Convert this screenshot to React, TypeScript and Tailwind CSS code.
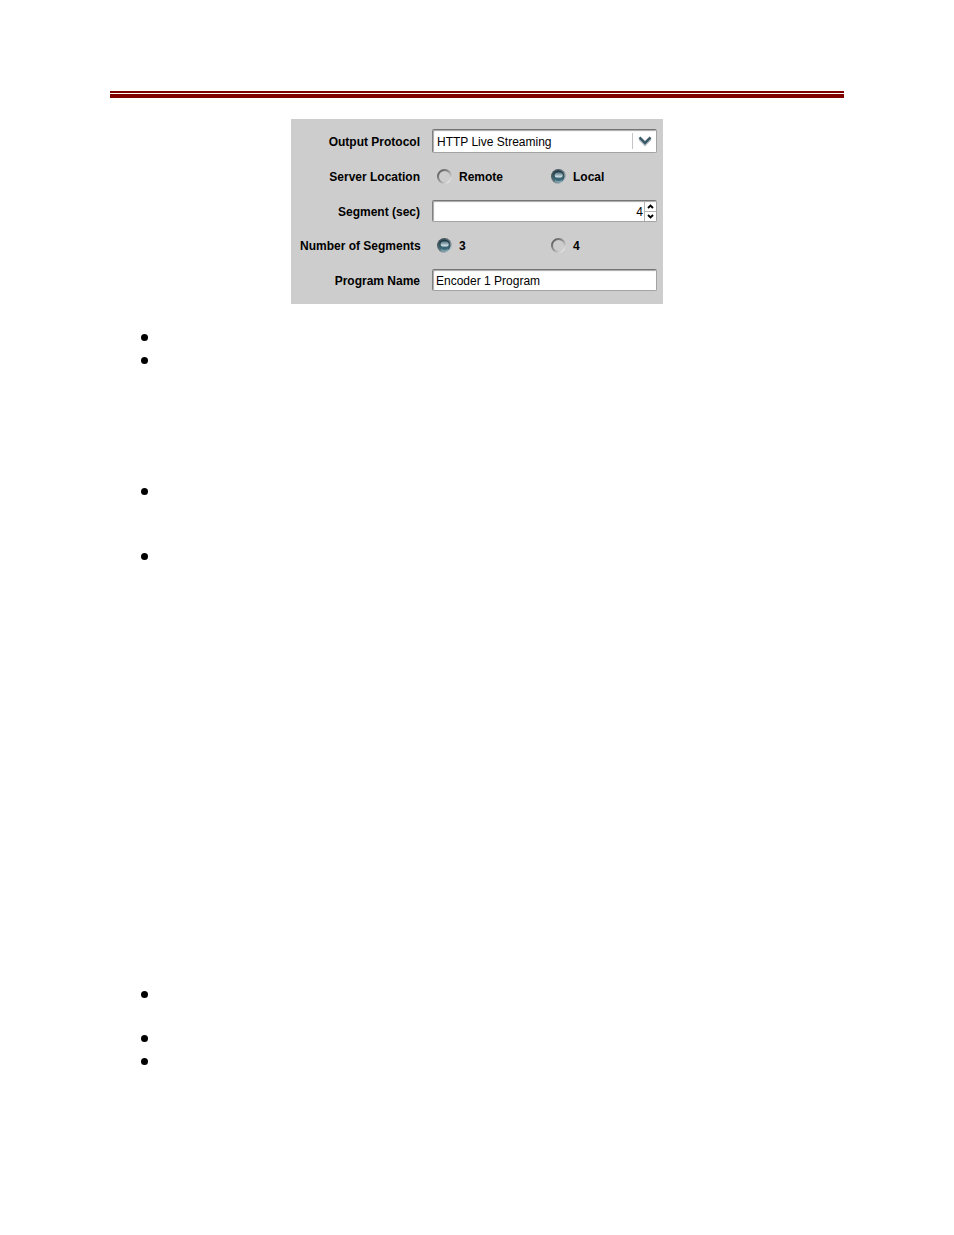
import { useState } from "react";

const labelClass = "pt-[2px] text-right whitespace-nowrap";

const fieldClass =
  "w-full rounded-[2px] border border-[#a3a3a3] border-t-[#757575] border-l-[#808080] bg-white pt-[2px] text-xs text-black shadow-[inset_1px_1px_1px_#a8a8a8] outline-none";

type RadioProps = {
  name: string;
  label: string;
  checked: boolean;
  onChange: () => void;
};

function Radio({ name, label, checked, onChange }: RadioProps) {
  return (
    <label className="flex h-[15px] w-[114px] shrink-0 items-center gap-[7px]">
      <span className="relative size-[15px]">
        <input
          type="radio"
          name={name}
          checked={checked}
          onChange={onChange}
          className="peer block size-[15px] appearance-none rounded-full outline-none"
        />
        <svg
          viewBox="0 0 15 15"
          className="pointer-events-none absolute inset-0 size-[15px] peer-checked:hidden"
        >
          <circle cx="7.5" cy="7.5" r="6.5" fill="none" stroke="url(#ring)" strokeWidth="2" />
        </svg>
        <svg
          viewBox="0 0 15 15"
          className="pointer-events-none absolute inset-0 hidden size-[15px] peer-checked:block"
        >
          <circle cx="7.5" cy="7.5" r="7.5" fill="url(#rim)" />
          <circle cx="7.5" cy="7.5" r="6" fill="url(#ball)" />
          <ellipse cx="7.7" cy="6.2" rx="4" ry="3" fill="url(#shine)" />
          <path d="M3.4 8.6h8.4c-.4 1.5-1.8 2.4-4.2 2.4s-3.8-.9-4.2-2.4z" fill="#3a6677" />
          <path d="M4 11.6c2 1.5 5 1.5 7 0" fill="none" stroke="#7fa3af" strokeWidth="1.2" />
        </svg>
      </span>
      {label}
    </label>
  );
}

function Gradients() {
  return (
    <svg className="absolute size-0" aria-hidden="true">
      <defs>
        <linearGradient id="ring" x1="0" y1="0" x2="1" y2="1">
          <stop offset="0.1" stopColor="#606060" />
          <stop offset="0.5" stopColor="#979797" />
          <stop offset="0.9" stopColor="#e6e6e6" />
        </linearGradient>
        <linearGradient id="rim" x1="0" y1="0" x2="1" y2="1">
          <stop offset="0.15" stopColor="#3d4e56" />
          <stop offset="0.5" stopColor="#65777f" />
          <stop offset="0.9" stopColor="#d8dcde" />
        </linearGradient>
        <linearGradient id="ball" x1="0" y1="0" x2="0" y2="1">
          <stop offset="0" stopColor="#1d3640" />
          <stop offset="1" stopColor="#4b7988" />
        </linearGradient>
        <linearGradient id="shine" x1="0" y1="0" x2="0" y2="1">
          <stop offset="0" stopColor="#4f707d" />
          <stop offset="0.8" stopColor="#d5e3e8" />
        </linearGradient>
      </defs>
    </svg>
  );
}

function EncoderForm() {
  const [location, setLocation] = useState("Local");
  const [segment, setSegment] = useState(4);
  const [count, setCount] = useState("3");
  const [program, setProgram] = useState("Encoder 1 Program");

  return (
    <form className="grid w-[372px] grid-cols-[120px_225px] items-center gap-x-3 gap-y-4 bg-[#cdcdcd] pt-[10px] pr-[6px] pb-[13px] pl-[9px] text-xs font-bold text-black">
      <label htmlFor="protocol" className={labelClass}>
        Output Protocol
      </label>
      <div className="relative h-6">
        <select
          id="protocol"
          className={`${fieldClass} h-6 appearance-none pl-1 font-normal`}
        >
          <option>HTTP Live Streaming</option>
        </select>
        <div className="pointer-events-none absolute inset-y-1 right-0 flex w-[25px] items-center justify-center border-l border-[#c4c4c4]">
          <svg viewBox="0 0 14 12" className="h-3 w-[14px]">
            <path d="M1.5 3.8l5.5 5.5 5.5-5.5" fill="none" stroke="#b4bfc4" strokeWidth="3" />
            <path d="M1.5 2.3l5.5 5.5 5.5-5.5" fill="none" stroke="#3c5a69" strokeWidth="2.6" />
          </svg>
        </div>
      </div>

      <span className="h-[15px] text-right leading-[17px]">Server Location</span>
      <div role="radiogroup" aria-label="Server Location" className="flex h-[15px] pl-[5px]">
        {["Remote", "Local"].map((value) => (
          <Radio
            key={value}
            name="location"
            label={value}
            checked={location === value}
            onChange={() => setLocation(value)}
          />
        ))}
      </div>

      <label htmlFor="segment" className={labelClass}>
        Segment (sec)
      </label>
      <div className="relative h-[22px]">
        <input
          id="segment"
          type="text"
          inputMode="numeric"
          value={segment}
          onChange={(e) => setSegment(Number(e.target.value) || 0)}
          className={`${fieldClass} h-[22px] pr-[13px] text-right font-normal`}
        />
        <div className="absolute top-[2px] right-px bottom-px flex w-3 flex-col border-l border-[#b5b5b5]">
          <button
            type="button"
            aria-label="Increase"
            onClick={() => setSegment(segment + 1)}
            className="flex flex-1 items-center justify-center border-b border-[#b5b5b5]"
          >
            <svg viewBox="0 0 7 5" className="h-[5px] w-[7px]">
              <path d="M1 4l2.5-2.5L6 4" fill="none" stroke="#000" strokeWidth="1.9" />
            </svg>
          </button>
          <button
            type="button"
            aria-label="Decrease"
            onClick={() => setSegment(segment - 1)}
            className="flex flex-1 items-center justify-center"
          >
            <svg viewBox="0 0 7 5" className="h-[5px] w-[7px]">
              <path d="M1 1l2.5 2.5L6 1" fill="none" stroke="#000" strokeWidth="1.9" />
            </svg>
          </button>
        </div>
      </div>

      <span className="h-[15px] text-right leading-[17px] whitespace-nowrap">
        Number of Segments
      </span>
      <div role="radiogroup" aria-label="Number of Segments" className="flex h-[15px] pl-[5px]">
        {["3", "4"].map((value) => (
          <Radio
            key={value}
            name="count"
            label={value}
            checked={count === value}
            onChange={() => setCount(value)}
          />
        ))}
      </div>

      <label htmlFor="program" className={labelClass}>
        Program Name
      </label>
      <input
        id="program"
        type="text"
        value={program}
        onChange={(e) => setProgram(e.target.value)}
        className={`${fieldClass} h-[22px] pl-[3px] font-normal`}
      />
    </form>
  );
}

const items = [
  "h-[23px]",
  "h-[131px]",
  "h-[65px]",
  "h-[438px]",
  "h-[44px]",
  "h-[23px]",
  "h-[23px]",
];

export default function App() {
  return (
    <main className="min-h-screen bg-white px-[110px] pt-[91px] font-['Liberation_Sans',Arial,sans-serif]">
      <Gradients />
      <div className="h-[2px] bg-[#800000]" />
      <div className="mt-px h-1 bg-[#800000]" />
      <div className="mt-[21px] flex justify-center">
        <EncoderForm />
      </div>
      <ul className="mt-[30px] pl-[31px]">
        {items.map((height, i) => (
          <li key={i} className={height}>
            <span className="block size-[7px] rounded-full bg-black" />
          </li>
        ))}
      </ul>
    </main>
  );
}
